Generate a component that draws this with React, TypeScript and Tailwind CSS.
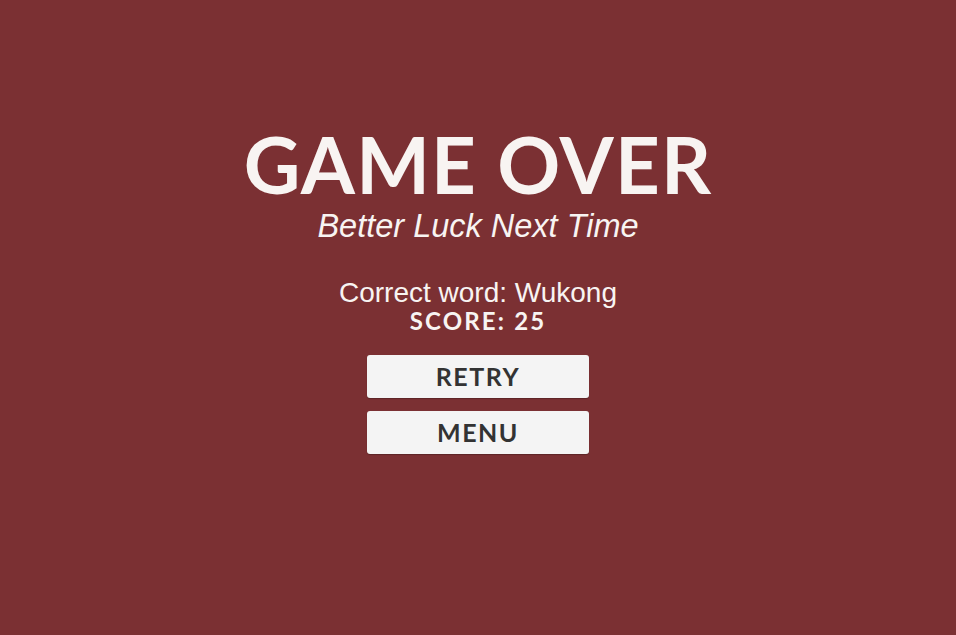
import React from 'react';

/* Game over screen: headline, correct word, score and two actions. */

function MenuButton({ label }: { label: string }) {
  return (
    <button className="flex h-[43px] w-[222px] items-center justify-center rounded-[3px] bg-[#f4f4f4] font-['Lato','Open_Sans',sans-serif] text-[25px] font-bold leading-none tracking-[0.06em] text-[#333333] shadow-[0_1px_1px_rgba(0,0,0,0.25)]">
      {label}
    </button>
  );
}

export default function App() {
  return (
    <div className="flex h-[635px] w-full flex-col items-center bg-[#7b3033] pt-[125px] text-[#f8f4f2]">
      <h1 className="font-['Lato','Open_Sans',sans-serif] text-[78px] font-bold leading-none tracking-[0.015em]">
        GAME OVER
      </h1>
      <p className="mt-[7px] font-['Liberation_Sans',Arial,sans-serif] text-[32.5px] italic leading-none">
        Better Luck Next Time
      </p>
      <p className="mt-[36px] font-['Liberation_Sans',Arial,sans-serif] text-[28px] leading-none">
        Correct word: Wukong
      </p>
      <p className="mt-[2px] font-['Lato','Open_Sans',sans-serif] text-[24px] font-bold leading-none tracking-[0.09em]">
        SCORE: 25
      </p>
      <div className="mt-[22px] flex flex-col gap-[13px]">
        <MenuButton label="RETRY" />
        <MenuButton label="MENU" />
      </div>
    </div>
  );
}
